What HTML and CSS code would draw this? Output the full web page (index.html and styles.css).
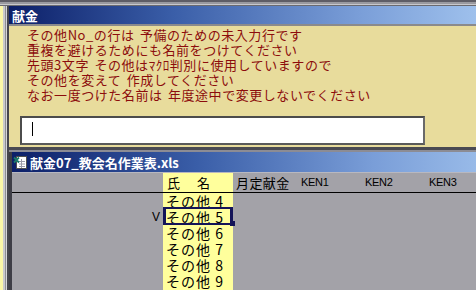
FILE: index.html
```html
<!DOCTYPE html>
<html lang="ja">
<head>
<meta charset="utf-8">
<link rel="stylesheet" href="styles.css">
</head>
<body>
<div class="screen">
  <div class="topstrip"></div>
  <div class="desk">
    <div class="gutter"></div>
    <div class="stack">
      <section class="dialog">
        <div class="titlebar dlg-title"><span class="title-text">献金</span></div>
        <div class="dlg-body">
          <p class="msg">その他No_の行は 予備のための未入力行です</p>
          <p class="msg">重複を避けるためにも名前をつけてください</p>
          <p class="msg">先頭3文字 その他はﾏｸﾛ判別に使用していますので</p>
          <p class="msg">その他を変えて 作成してください</p>
          <p class="msg">なお一度つけた名前は 年度途中で変更しないでください</p>
          <div class="inputbox"><span class="caret"></span></div>
        </div>
      </section>
      <div class="sep"></div>
      <section class="book">
        <div class="titlebar book-title">
          <svg class="xls-icon" width="15" height="15" viewBox="0 0 15 15">
            <rect x="3.5" y="1.5" width="10" height="12" fill="#ffffff" stroke="#505050"/>
            <path d="M6 6.5H12M6 9H12M6 11.5H12M8.5 4V13" stroke="#9a9aa8" stroke-width="1"/>
            <path d="M1 2.5L6 7.5M6 2.5L1 7.5" stroke="#1a7a6a" stroke-width="1.8"/>
          </svg>
          <span class="title-text">献金07_教会名作業表.xls</span>
        </div>
        <div class="sheet">
          <div class="cell head"></div>
          <div class="cell head name">氏　名</div>
          <div class="cell head jp">月定献金</div>
          <div class="cell head ken">KEN1</div>
          <div class="cell head ken">KEN2</div>
          <div class="cell head ken">KEN3</div>

          <div class="cell"></div><div class="cell name">その他 4</div><div class="cell"></div><div class="cell"></div><div class="cell"></div><div class="cell"></div>
          <div class="cell mark">V</div><div class="cell name selected">その他 5</div><div class="cell"></div><div class="cell"></div><div class="cell"></div><div class="cell"></div>
          <div class="cell"></div><div class="cell name">その他 6</div><div class="cell"></div><div class="cell"></div><div class="cell"></div><div class="cell"></div>
          <div class="cell"></div><div class="cell name">その他 7</div><div class="cell"></div><div class="cell"></div><div class="cell"></div><div class="cell"></div>
          <div class="cell"></div><div class="cell name">その他 8</div><div class="cell"></div><div class="cell"></div><div class="cell"></div><div class="cell"></div>
          <div class="cell"></div><div class="cell name">その他 9</div><div class="cell"></div><div class="cell"></div><div class="cell"></div><div class="cell"></div>
          <div class="cell"></div><div class="cell name">その他10</div><div class="cell"></div><div class="cell"></div><div class="cell"></div><div class="cell"></div>
        </div>
      </section>
    </div>
  </div>
</div>
</body>
</html>
```

FILE: styles.css
```css
* { box-sizing: border-box; }
html, body { margin: 0; padding: 0; }
body {
  width: 476px;
  height: 290px;
  overflow: hidden;
  background: #a3a2a8;
  font-family: "Noto Sans CJK JP", "Noto Sans", sans-serif;
}
.screen {
  width: 476px;
  height: 290px;
  display: flex;
  flex-direction: column;
  overflow: hidden;
}
.topstrip {
  height: 6px;
  flex: none;
  background: linear-gradient(to bottom, #5e5d66 0 2px, #9a9aa0 2px 4px, #c8c8cc 4px 5px, #6a6a70 5px 6px);
}
.desk {
  flex: 1;
  display: flex;
  min-height: 0;
}
.gutter {
  width: 9px;
  flex: none;
  background: linear-gradient(to right, #fbf7a8 0 3px, #c9c9cc 3px 5px, #8e8e94 5px 6px, #d6d6d8 6px 7px, #46464e 7px 9px);
}
.stack {
  flex: 1;
  display: flex;
  flex-direction: column;
  min-width: 0;
}
.titlebar {
  display: flex;
  align-items: center;
  color: #ffffff;
  font-weight: bold;
  font-size: 13px;
  white-space: nowrap;
}
.dlg-title {
  height: 20px;
  padding-left: 3px;
  background: linear-gradient(to right, #0c1f68 0%, #3a5ea8 35%, #7a9ed8 75%, #9ec0ec 100%);
  border-bottom: 2px solid #8a8a8c;
}
.dlg-body {
  height: 121px;
  background: #e8dc9c;
  padding: 1px 0 0 18px;
}
.msg {
  margin: 0;
  height: 15px;
  line-height: 15px;
  font-size: 13px;
  letter-spacing: 0.55px;
  word-spacing: 2px;
  color: #8c0c0c;
  white-space: nowrap;
}
.inputbox {
  margin: 14px 0 0 -7px;
  width: 405px;
  height: 29px;
  background: #ffffff;
  border: 2px solid #4c4c4c;
  border-right-color: #6a6a6a;
  border-bottom-color: #5a5a5a;
  padding: 4px 0 0 10px;
}
.caret {
  display: block;
  width: 1px;
  height: 14px;
  background: #000000;
}
.sep {
  height: 5px;
  flex: none;
  background: linear-gradient(to bottom, #4a4a52 0 3px, #8c8c94 3px 5px);
}
.book {
  flex: 1;
  display: flex;
  flex-direction: column;
  border-left: 3px solid #3e3e46;
  min-height: 0;
}
.book-title {
  height: 20px;
  flex: none;
  padding-left: 1px;
  gap: 2px;
  background: linear-gradient(to right, #0c1f68 0%, #3a5ea8 40%, #7a9ed8 78%, #98bae8 100%);
}
.xls-icon { flex: none; }
.sheet {
  display: grid;
  grid-template-columns: 151px 70px 64px 64px 64px 1fr;
  grid-template-rows: 20px repeat(7, 16px);
  border-top: 1px solid #b8b8c0;
  background: #a3a2a8;
}
.cell {
  font-size: 14px;
  line-height: 16px;
  color: #000000;
  white-space: nowrap;
  overflow: visible;
}
.cell.head {
  border-bottom: 1px solid #000000;
  line-height: 19px;
  font-size: 13px;
  padding-left: 3px;
}
.cell.name {
  background: #ffff9c;
  padding-left: 3px;
  letter-spacing: 1px;
}
.cell.head.name {
  padding-left: 4px;
  letter-spacing: 2px;
}
.cell.head.jp {
  letter-spacing: 0.4px;
}
.cell.head.ken {
  font-family: "Liberation Sans", Arial, sans-serif;
  font-size: 11px;
  padding-left: 4px;
  letter-spacing: -0.3px;
}
.cell.mark {
  font-family: "Liberation Sans", Arial, sans-serif;
  font-size: 12px;
  text-align: right;
  padding-right: 3px;
}
.cell.selected {
  position: relative;
}
.cell.selected::after {
  content: "";
  position: absolute;
  left: 0;
  right: 0;
  top: -2px;
  bottom: 0;
  border: 3px solid #141458;
  border-top-width: 2px;
  border-bottom-width: 2px;
}
.cell.selected::before {
  content: "";
  position: absolute;
  right: -2px;
  bottom: -1px;
  width: 5px;
  height: 5px;
  background: #141458;
  z-index: 1;
}
```
